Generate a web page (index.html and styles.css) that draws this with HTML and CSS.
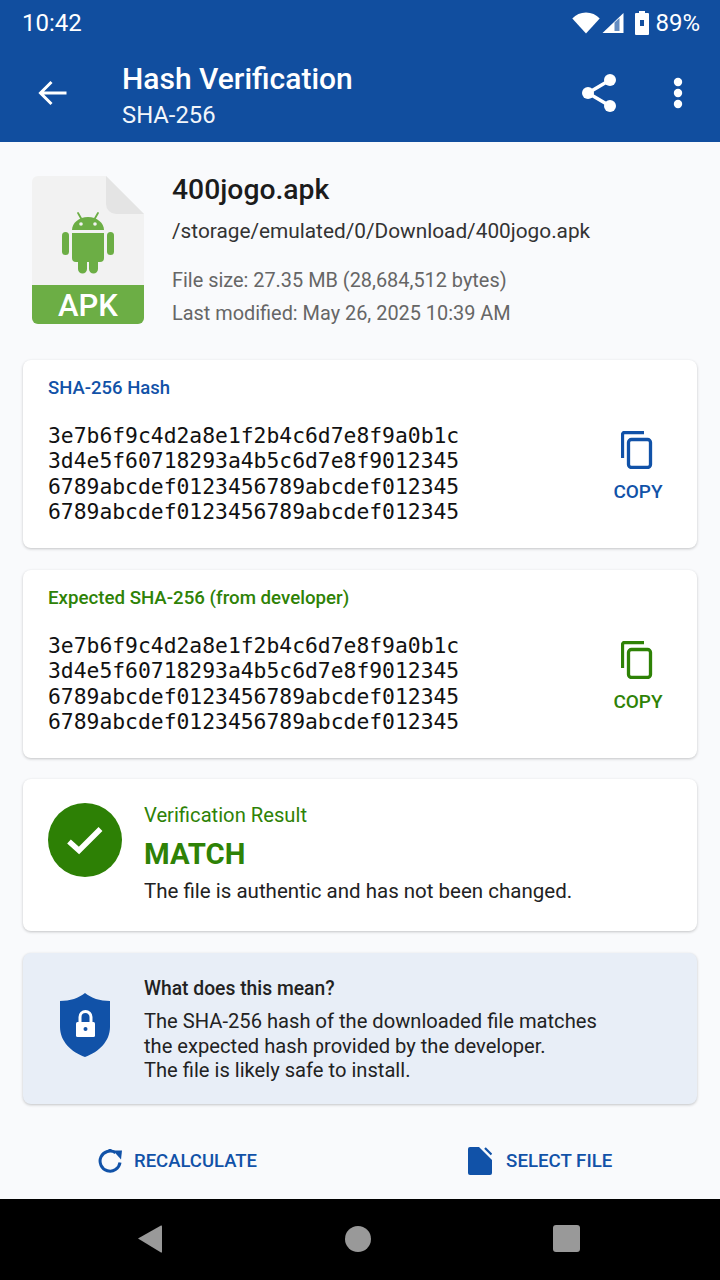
FILE: index.html
```html
<!DOCTYPE html>
<html lang="en">

<head>
    <meta charset="UTF-8">
    <meta name="viewport" content="width=device-width, initial-scale=1.0">
    <title>Hash Verification</title>
    <link rel="stylesheet" href="styles.css">
</head>

<body>
    <!-- Top bar -->
    <header class="topbar">
        <div class="status-bar">
            <span class="status-time">10:42</span>
            <div class="status-icons">
                <svg class="wifi-icon" width="28" height="22" viewBox="0 0 28 22"><path d="M14 21.500 .3 6.500C3.800 2.800 8.600.5 14 .5s10.200 2.300 13.700 6z" fill="#fff"/></svg>
                <svg class="signal-icon" width="22" height="22" viewBox="0 0 22 22"><path d="M21.500 1v20H.5z" fill="#fff"/><path d="M12.500 10.500v8.500h5V6z" fill="#114e9f" fill-opacity=".65"/></svg>
                <svg class="battery-icon" width="14" height="24" viewBox="0 0 14 24"><path d="M4 0h6v2h3a1 1 0 0 1 1 1v20a1 1 0 0 1-1 1H1a1 1 0 0 1-1-1V3a1 1 0 0 1 1-1h3zM5 9v6h4V9z" fill="#fff" fill-rule="evenodd"/></svg>
                <span class="status-pct">89%</span>
            </div>
        </div>
        <div class="toolbar">
            <svg class="back-icon" width="32" height="32" viewBox="0 0 32 32"><path d="M30.500 16H5M15.500 5 4.500 16l11 11" fill="none" stroke="#fff" stroke-width="3"/></svg>
            <div class="toolbar-title">
                <div class="title">Hash Verification</div>
                <div class="subtitle">SHA-256</div>
            </div>
            <svg class="share-icon" width="38" height="40" viewBox="0 0 38 40"><path d="M29 7 7 20l22 13" fill="none" stroke="#fff" stroke-width="3.500"/><circle cx="29" cy="7" r="6" fill="#fff"/><circle cx="7" cy="20" r="6" fill="#fff"/><circle cx="29" cy="33" r="6" fill="#fff"/></svg>
            <svg class="more-icon" width="10" height="32" viewBox="0 0 10 32"><circle cx="5" cy="5" r="4.200" fill="#fff"/><circle cx="5" cy="16" r="4.200" fill="#fff"/><circle cx="5" cy="27" r="4.200" fill="#fff"/></svg>
        </div>
    </header>

    <main class="content">
        <!-- File info -->
        <section class="file-info">
            <svg class="apk-icon" width="112" height="148" viewBox="0 0 112 148">
                <path d="M6 0h68l38 38v104a6 6 0 0 1-6 6H6a6 6 0 0 1-6-6V6a6 6 0 0 1 6-6z" fill="#f2f2f2"/>
                <path d="M74 0l38 38H84a10 10 0 0 1-10-10z" fill="#e4e4e4"/>
                <path d="M0 109h112v33a6 6 0 0 1-6 6H6a6 6 0 0 1-6-6z" fill="#6cae45"/>
                <g fill="#6cae45">
                    <path d="M46 37l4 7M66 37l-4 7" stroke="#6cae45" stroke-width="1.800" stroke-linecap="round"/>
                    <path d="M40 54c0-7 7-13 16-13s16 6 16 13z"/>
                    <path d="M40 57h32v25a4 4 0 0 1-4 4h-2v7a4.500 4.500 0 0 1-9 0v-7h-2v7a4.500 4.500 0 0 1-9 0v-7h-2a4 4 0 0 1-4-4z"/>
                    <rect x="30" y="56" width="7" height="23" rx="3.500"/>
                    <rect x="75" y="56" width="7" height="23" rx="3.500"/>
                </g>
                <circle cx="49" cy="48" r="1.800" fill="#f2f2f2"/>
                <circle cx="63" cy="48" r="1.800" fill="#f2f2f2"/>
            </svg>
            <span class="apk-label">APK</span>
            <div class="file-text">
                <div class="file-name">400jogo.apk</div>
                <div class="file-path">/storage/emulated/0/Download/400jogo.apk</div>
                <div class="file-meta">File size: 27.35 MB (28,684,512 bytes)</div>
                <div class="file-meta">Last modified: May 26, 2025 10:39 AM</div>
            </div>
        </section>

        <!-- Computed hash -->
        <section class="card hash-card">
            <div class="card-label blue">SHA-256 Hash</div>
            <div class="hash-row">
                <div class="hash-text">3e7b6f9c4d2a8e1f2b4c6d7e8f9a0b1c<br>3d4e5f60718293a4b5c6d7e8f9012345<br>6789abcdef0123456789abcdef012345<br>6789abcdef0123456789abcdef012345</div>
                <div class="copy blue">
                    <svg width="32" height="38" viewBox="0 0 32 38" fill="none" stroke="#1152a8" stroke-width="3.300"><path d="M23 1.500H3.500a2 2 0 0 0-2 2V27"/><rect x="7.500" y="8.500" width="22" height="28" rx="3"/></svg>
                    <span>COPY</span>
                </div>
            </div>
        </section>

        <!-- Expected hash -->
        <section class="card hash-card expected-card">
            <div class="card-label green">Expected SHA-256 (from developer)</div>
            <div class="hash-row">
                <div class="hash-text">3e7b6f9c4d2a8e1f2b4c6d7e8f9a0b1c<br>3d4e5f60718293a4b5c6d7e8f9012345<br>6789abcdef0123456789abcdef012345<br>6789abcdef0123456789abcdef012345</div>
                <div class="copy green">
                    <svg width="32" height="38" viewBox="0 0 32 38" fill="none" stroke="#2e8206" stroke-width="3.300"><path d="M23 1.500H3.500a2 2 0 0 0-2 2V27"/><rect x="7.500" y="8.500" width="22" height="28" rx="3"/></svg>
                    <span>COPY</span>
                </div>
            </div>
        </section>

        <!-- Result -->
        <section class="card result-card">
            <svg class="result-icon" width="74" height="74" viewBox="0 0 74 74"><circle cx="37" cy="37" r="37" fill="#2d8005"/><path d="M21 38.500 31 47.500 52.500 26" fill="none" stroke="#fff" stroke-width="5.500"/></svg>
            <div>
                <div class="result-label">Verification Result</div>
                <div class="result-value">MATCH</div>
                <div class="result-desc">The file is authentic and has not been changed.</div>
            </div>
        </section>

        <!-- Explanation -->
        <section class="card info-card">
            <svg class="shield-icon" width="50" height="64" viewBox="0 0 50 64">
                <path d="M25 0c6 5 15 8 25 8v26c0 14-11 25-25 30C11 59 0 48 0 34V8c10 0 19-3 25-8z" fill="#1152a8"/>
                <path d="M20 30v-6a5.500 5.500 0 0 1 11 0v6" fill="none" stroke="#fff" stroke-width="3"/>
                <rect x="16" y="29" width="19" height="15" rx="1.500" fill="#fff"/>
                <circle cx="25.500" cy="36" r="2" fill="#1152a8"/>
            </svg>
            <div>
                <div class="info-title">What does this mean?</div>
                <div class="info-text">The SHA-256 hash of the downloaded file matches<br>the expected hash provided by the developer.<br>The file is likely safe to install.</div>
            </div>
        </section>

        <!-- Actions -->
        <div class="actions">
            <div class="action recalc">
                <svg width="24" height="26" viewBox="0 0 24 26" fill="none"><path d="M22 14.500A10 10 0 1 1 17.500 4.700" stroke="#1152a8" stroke-width="3"/><path d="M15 2.500 24 2.500 23 11.500z" fill="#1152a8"/><path d="M10.500 1h3v3h-3z" fill="#1152a8"/></svg>
                <span>RECALCULATE</span>
            </div>
            <div class="action select">
                <svg width="24" height="28" viewBox="0 0 24 28"><path d="M2 0h9l13 13v13a2 2 0 0 1-2 2H2a2 2 0 0 1-2-2V2a2 2 0 0 1 2-2z" fill="#1152a8"/><path d="M17 1l6.500 6.500" stroke="#1152a8" stroke-width="2.200" fill="none"/></svg>
                <span>SELECT FILE</span>
            </div>
        </div>
    </main>

    <!-- Android nav -->
    <nav class="navbar">
        <svg width="26" height="28" viewBox="0 0 26 28"><path d="M1 13.500 24 .5q1-.5 1 1v25q0 1.500-1 1z" fill="#999"/></svg>
        <span class="nav-home"></span>
        <span class="nav-recent"></span>
    </nav>
</body>

</html>
```

FILE: styles.css
```css
* {
    box-sizing: border-box;
}

body {
    font-family: Roboto, "Noto Sans", sans-serif;
    margin: 0;
    padding: 0;
    width: 720px;
    height: 1280px;
    display: flex;
    flex-direction: column;
    background-color: #f9fafc;
    overflow: hidden;
    color: #1c1c1c;
}

/* Top bar */
.topbar {
    height: 142px;
    background-color: #114e9f;
    color: white;
    flex-shrink: 0;
}

.status-bar {
    height: 46px;
    padding: 0 20px 0 22px;
    display: flex;
    align-items: center;
    justify-content: space-between;
}

.status-time {
    font-size: 24px;
}

.status-icons {
    display: flex;
    align-items: center;
}

.wifi-icon {
    margin-right: 2px;
}

.signal-icon {
    margin-right: 11px;
}

.battery-icon {
    margin-right: 6px;
}

.status-pct {
    font-size: 24px;
}

.toolbar {
    height: 96px;
    display: flex;
    align-items: center;
    padding: 0 37px 2px 36px;
}

.back-icon {
    flex-shrink: 0;
    margin-right: 54px;
}

.toolbar-title {
    flex: 1;
    margin-top: 6px;
}

.title {
    font-size: 30px;
    font-weight: 500;
    line-height: 38px;
}

.subtitle {
    font-size: 23.800px;
    line-height: 34px;
    opacity: 0.95;
}

.more-icon {
    margin-left: 54px;
}

/* File info */
.content {
    flex: 1;
    padding: 0 23px;
    display: flex;
    flex-direction: column;
}

.file-info {
    position: relative;
    height: 218px;
    display: flex;
    padding: 34px 0 0 9px;
}

.apk-icon {
    flex-shrink: 0;
    margin-right: 28px;
}

.apk-label {
    position: absolute;
    left: 9px;
    top: 146px;
    width: 112px;
    text-align: center;
    color: white;
    font-size: 31px;
    font-weight: 500;
    line-height: 36px;
}

.file-name {
    font-size: 28.300px;
    font-weight: 500;
    line-height: 28px;
}

.file-path {
    font-size: 20.800px;
    line-height: 28px;
    margin-top: 13px;
    margin-bottom: 19px;
    color: #333;
}

.file-meta {
    font-size: 19.900px;
    line-height: 33px;
    color: #666;
}

/* Cards */
.card {
    background-color: white;
    border-radius: 8px;
    box-shadow: 0 1px 3px rgba(0, 0, 0, 0.22);
    margin-bottom: 21px;
}

.hash-card {
    height: 188px;
    padding: 16px 25px;
    margin-bottom: 22px;
}

.expected-card {
    margin-bottom: 21px;
}

.card-label {
    font-size: 18.500px;
    font-weight: 500;
    line-height: 24px;
}

.card-label.green {
    font-size: 18.700px;
}

.blue {
    color: #1152a8;
}

.green {
    color: #2e8206;
}

.hash-row {
    display: flex;
    align-items: center;
    justify-content: space-between;
    margin-top: 23px;
}

.hash-text {
    font-family: "DejaVu Sans Mono", monospace;
    font-size: 21.350px;
    line-height: 25.300px;
    color: #111;
}

.copy {
    display: flex;
    flex-direction: column;
    align-items: center;
    width: 50px;
    margin-right: 9px;
    margin-top: -14px;
    font-size: 19px;
    font-weight: 500;
}

.copy svg {
    margin-left: -2px;
}

.copy span {
    margin-top: 11px;
}

.result-card {
    height: 152px;
    display: flex;
    padding: 24px 25px;
    margin-bottom: 22px;
}

.result-icon {
    flex-shrink: 0;
    margin-right: 22px;
}

.result-label {
    font-size: 20.200px;
    line-height: 24px;
    color: #2e8206;
}

.result-value {
    font-size: 29.300px;
    font-weight: 700;
    line-height: 55px;
    color: #2e8206;
}

.result-desc {
    font-size: 20.500px;
    line-height: 24px;
    margin-top: -3px;
    color: #222;
}

.info-card {
    height: 151px;
    background-color: #e8eef7;
    display: flex;
    padding: 23px 0 0 37px;
    margin-bottom: 0;
}

.shield-icon {
    flex-shrink: 0;
    margin: 17px 34px 0 0;
}

.info-title {
    font-size: 19.300px;
    font-weight: 500;
    line-height: 26px;
    color: #222;
}

.info-text {
    font-size: 20.150px;
    line-height: 24.500px;
    margin-top: 7px;
    color: #222;
}

/* Actions */
.actions {
    flex: 1;
    display: flex;
    align-items: center;
    padding-top: 19px;
}

.action {
    display: flex;
    align-items: center;
    gap: 12px;
    font-size: 18.500px;
    font-weight: 500;
    color: #1152a8;
}

.recalc {
    margin-left: 75px;
}

.select {
    margin-left: 211px;
    gap: 14px;
    font-size: 18.700px;
}

/* Android nav */
.navbar {
    height: 81px;
    flex-shrink: 0;
    background-color: black;
    display: flex;
    align-items: center;
    padding: 0 140px 2px 137px;
    justify-content: space-between;
}

.nav-home {
    width: 26px;
    height: 26px;
    border-radius: 50%;
    background-color: #999;
}

.nav-recent {
    width: 27px;
    height: 27px;
    border-radius: 3px;
    background-color: #999;
}
```
